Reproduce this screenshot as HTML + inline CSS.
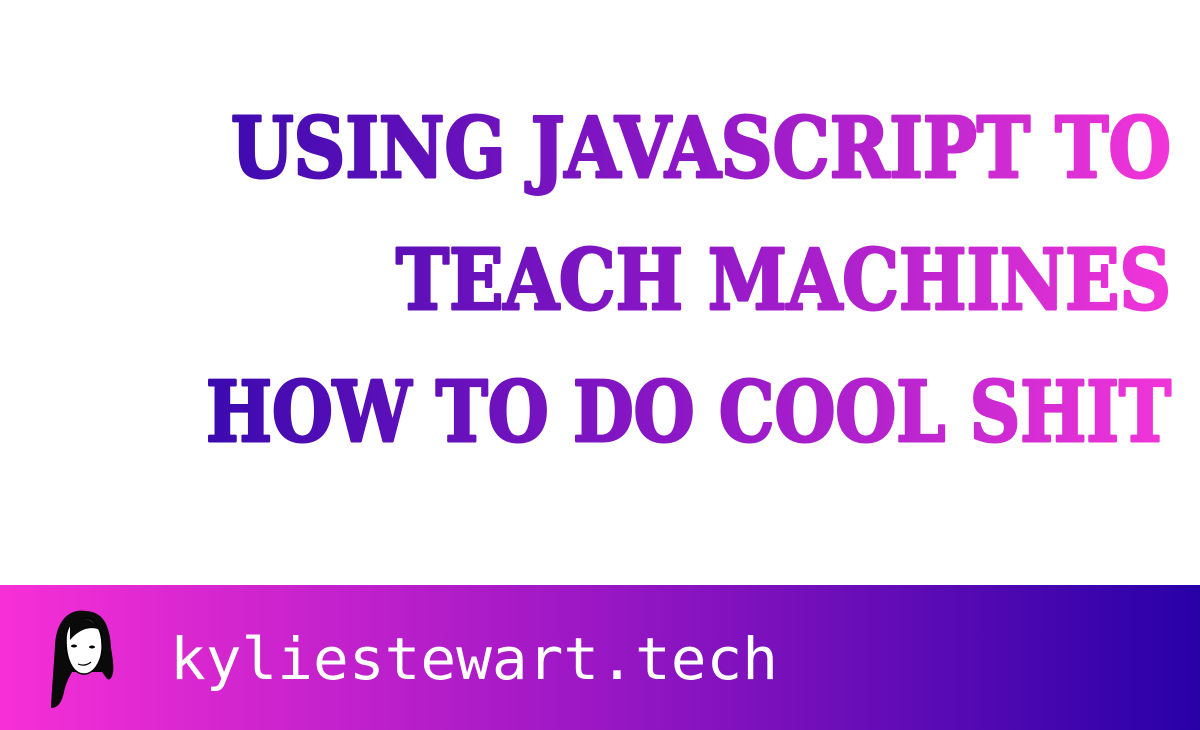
<!DOCTYPE html>
<html><head><meta charset="utf-8"><style>
html,body{margin:0;padding:0;width:1200px;height:730px;overflow:hidden;background:#fff}
</style></head><body>
<svg width="1200" height="730" viewBox="0 0 1200 730" xmlns="http://www.w3.org/2000/svg">
<defs>
<linearGradient id="tg" gradientUnits="userSpaceOnUse" x1="200" y1="0" x2="1175" y2="0">
<stop offset="0" stop-color="#3a0aaf"/>
<stop offset="0.5" stop-color="#8e17c6"/>
<stop offset="1" stop-color="#f236d9"/>
</linearGradient>
<linearGradient id="fg" x1="0" y1="0" x2="1" y2="0">
<stop offset="0" stop-color="#f72fd6"/>
<stop offset="0.5" stop-color="#9a17c4"/>
<stop offset="1" stop-color="#2800a8"/>
</linearGradient>
</defs>
<g font-family="'DejaVu Serif', 'Liberation Serif', serif" font-weight="bold" font-size="83" fill="url(#tg)" stroke="url(#tg)" stroke-width="3" stroke-linejoin="round" text-anchor="end">
<text x="1171" y="177" textLength="940" lengthAdjust="spacingAndGlyphs">USING JAVASCRIPT TO</text>
<text x="1171" y="309" textLength="775" lengthAdjust="spacingAndGlyphs">TEACH MACHINES</text>
<text x="1171" y="441" textLength="965" lengthAdjust="spacingAndGlyphs">HOW TO DO COOL SHIT</text>
</g>
<rect x="0" y="585" width="1200" height="145" fill="url(#fg)"/>
<g>
<path d="M86 611 C66 608 56 625 55 645 C54 665 52 685 51 708 C58 708 62 702 64 692 C66 682 70 676 72 672 L102 672 C106 677 108 682 111 678 C115 672 113 660 111 648 C110 630 106 612 86 611 Z" fill="#0a0a0a"/>
<path d="M66 640 C66 625 74 618 86 618 C97 620 103 632 102 650 C101 662 94 674 84 674 C74 674 66 662 66 640 Z" fill="#fff" stroke="#000" stroke-width="1.5"/>
<path d="M70 622 C78 616 92 616 100 630 C92 626 80 628 70 640 Z" fill="#0a0a0a"/>
<ellipse cx="74" cy="646" rx="3" ry="1.5" fill="#000"/>
<ellipse cx="92" cy="647" rx="3" ry="1.5" fill="#000"/>
<path d="M78 664 Q85 667 91 662" stroke="#000" stroke-width="1.2" fill="none"/>
</g>
<text x="170" y="679" font-family="'DejaVu Sans Mono','Liberation Mono',monospace" font-size="58" fill="#fff" textLength="608" lengthAdjust="spacingAndGlyphs">kyliestewart.tech</text>
</svg>
</body></html>
